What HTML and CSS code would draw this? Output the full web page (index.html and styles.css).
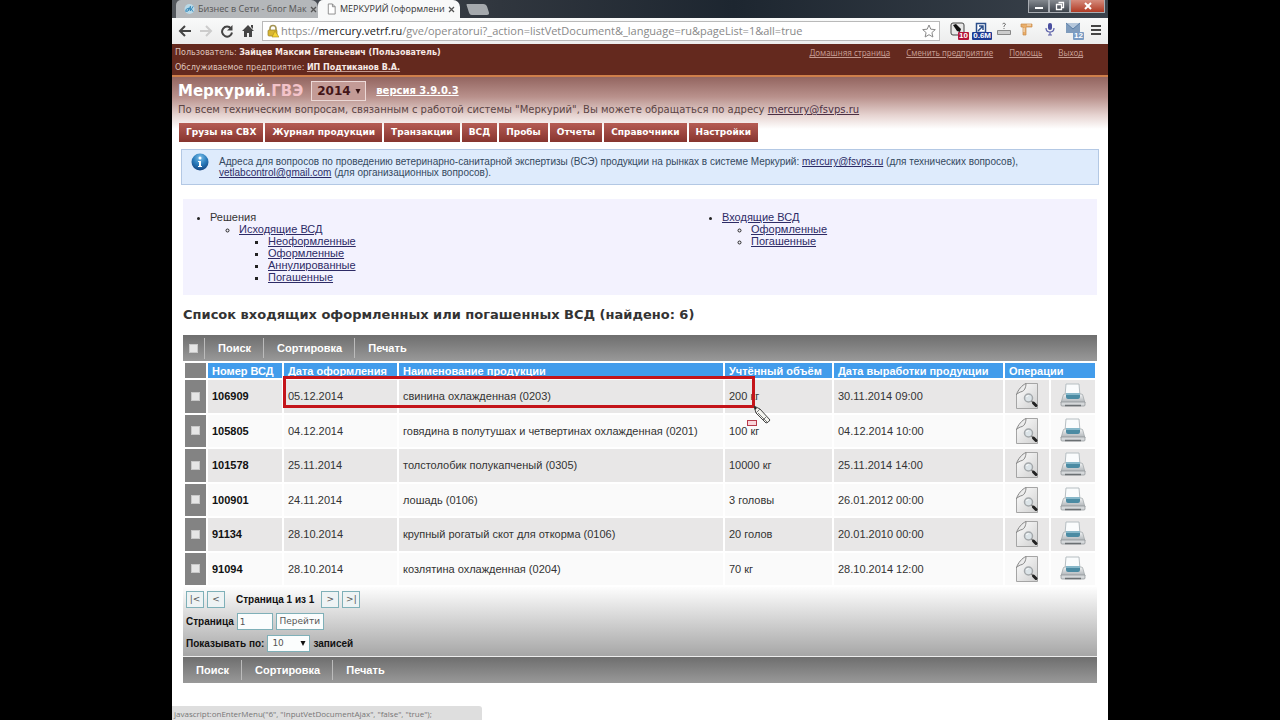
FILE: index.html
```html
<!DOCTYPE html>
<html lang="ru">
<head>
<meta charset="utf-8">
<title>МЕРКУРИЙ (оформление)</title>
<link rel="stylesheet" href="styles.css">
</head>
<body>
<svg class="defs" aria-hidden="true">
  <defs>
    <linearGradient id="paper" x1="0" y1="0" x2="1" y2="1"><stop offset="0" stop-color="#fff"/><stop offset="1" stop-color="#cfcfcf"/></linearGradient>
    <linearGradient id="body" x1="0" y1="0" x2="0" y2="1"><stop offset="0" stop-color="#f2f4f5"/><stop offset="1" stop-color="#a9aeb2"/></linearGradient>
    <radialGradient id="ball" cx=".5" cy=".25" r=".8"><stop offset="0" stop-color="#7cc0ea"/><stop offset=".5" stop-color="#2a7cbc"/><stop offset="1" stop-color="#123f7c"/></radialGradient>
  </defs>
  <symbol id="view" viewBox="0 0 26 28">
    <path d="M12 1.500H23.500V26.500H2.500V12Z" fill="url(#paper)"/>
    <path d="M12 1.500H23.500V26.500H2.500V12" fill="none" stroke="#a5a5a5"/>
    <path d="M12 1.500C12 6 10 9 8 9.500C6 10 4 11 2.500 12.500C4 8 8 3 12 1.500Z" fill="#ececec" stroke="#7b7b7b" stroke-width=".9"/>
    <circle cx="14.500" cy="16" r="4" fill="#dce4e8" stroke="#a4a8ab" stroke-width="1.500"/>
    <path d="M12.500 15a2.500 2.500 0 0 1 2-1.500" fill="none" stroke="#fff"/>
    <path d="M17.500 19l2 2" stroke="#777" stroke-width="1.500"/>
    <path d="M19.500 21l2.500 2.500" stroke="#222" stroke-width="3" stroke-linecap="round"/>
  </symbol>
  <symbol id="print" viewBox="0 0 26 26">
    <path d="M6 1H19L20 13H5Z" fill="#fafcfd" stroke="#b6bec2"/>
    <path d="M3 13Q3 11 5 11H21Q23 11 23 13L25 20H1Z" fill="url(#body)" stroke="#9aa0a4" stroke-width=".7"/>
    <path d="M6 10H20V14Q20 16 18 16H8Q6 16 6 14Z" fill="#4b8ba3"/>
    <path d="M6 10H20V12H6Z" fill="#86b7c9"/>
    <path d="M1 19H25V22Q25 23 24 23H2Q1 23 1 22Z" fill="#d5d8da" stroke="#8a8f93" stroke-width=".7"/>
    <path d="M5 22.500H21" stroke="#6a6f72" stroke-width="1.500"/>
  </symbol>
</svg>
<div class="window">
  <div class="tabs">
    <div class="tab tab-back"><svg class="fav" viewBox="0 0 12 12"><circle cx="6" cy="6" r="5.500" fill="#b9d9e8"/><path d="M2 8q3 2 3-3q-4 1-3 4M5 8l2-5 0 5 3-5M8 6l2 3" fill="none" stroke="#2f86b8"/></svg><span class="tab-text">Бизнес в Сети - блог Мак</span><button class="tab-x" aria-label="Закрыть"><svg viewBox="0 0 7 7"><path d="M1 1l5 5M6 1L1 6" stroke="#555" stroke-width="1.300"/></svg></button></div>
    <div class="tab tab-front"><svg class="fav" viewBox="0 0 12 12"><path d="M2.500 .5H7l3 3v8H2.500ZM7 .5v3h3" fill="#fff" stroke="#888"/></svg><span class="tab-text">МЕРКУРИЙ (оформлени</span><button class="tab-x" aria-label="Закрыть"><svg viewBox="0 0 7 7"><path d="M1 1l5 5M6 1L1 6" stroke="#555" stroke-width="1.300"/></svg></button></div>
    <div class="tab-new"></div>
    <div class="wincontrols">
      <button aria-label="Свернуть"><svg viewBox="0 0 12 10"><path d="M2 6h8v2H2z" fill="#fff"/></svg></button>
      <button aria-label="Развернуть"><svg viewBox="0 0 12 10"><path d="M4.500 1.500h5v5h-2M2.500 3.500h5v5h-5z" fill="none" stroke="#fff" stroke-width="1.300"/></svg></button>
      <button class="close" aria-label="Закрыть окно"><svg viewBox="0 0 12 10"><path d="M3 2l6 6M9 2l-6 6" stroke="#fff" stroke-width="2"/></svg></button>
    </div>
  </div>
  <div class="browserbar">
    <svg class="bicon" viewBox="0 0 14 14"><path d="M13 7H2M7 2L2 7l5 5" fill="none" stroke="#444" stroke-width="2"/></svg>
    <svg class="bicon" viewBox="0 0 14 14"><path d="M1 7h11M7 2l5 5-5 5" fill="none" stroke="#ccc" stroke-width="2"/></svg>
    <svg class="bicon" viewBox="0 0 14 14"><path d="M11 4.500A5 5 0 1 0 12 8.500" fill="none" stroke="#444" stroke-width="2"/><path d="M12.500 1v5.500H7z" fill="#444"/></svg>
    <svg class="bicon" viewBox="0 0 14 14"><path d="M7 1l6 6h-2v6H8V9H6v4H3V7H1zM10 1h2v4l-2-2z" fill="#444"/></svg>
    <div class="address">
      <svg class="lock" viewBox="0 0 12 14"><path d="M3 7V4.500a3 3 0 0 1 6 0V7" fill="none" stroke="#a49455" stroke-width="1.600"/><rect x="1" y="6" width="9" height="6" rx="1" fill="#d9b634" stroke="#97802a" stroke-width=".7"/><path d="M8 7l4 6H5z" fill="#f5d435" stroke="#a88a1c" stroke-width=".6"/></svg>
      <span class="url">https://<b>mercury.vetrf.ru</b>/gve/operatorui?_action=listVetDocument&amp;_language=ru&amp;pageList=1&amp;all=true</span>
      <svg class="bicon" viewBox="0 0 14 14"><path d="M7 1l1.800 4.200 4.500.4-3.400 3 1 4.400L7 10.700 3.100 13l1-4.400-3.400-3 4.500-.4z" fill="#fff" stroke="#888"/></svg>
    </div>
    <div class="exts">
      <div class="ext"><svg viewBox="0 0 16 14"><rect x="1" y="1" width="13" height="12" rx="2" fill="#e8e8e8" stroke="#444"/><path d="M3 3l3-1 5 5-1 3-3-1-2-3z" fill="#111"/></svg><span class="badge red">10</span></div>
      <div class="ext"><svg viewBox="0 0 16 14"><rect x="3.500" y="1.500" width="9" height="9" fill="#fff" stroke="#2a4e8a" stroke-width="1.500"/><path d="M5 9l5-5M6 4h4v4" fill="none" stroke="#2a4e8a" stroke-width="1.500"/></svg><span class="badge blue">0.6M</span></div>
      <div class="ext"><svg viewBox="0 0 16 14"><path d="M1.500 8.500h13v4h-13z" fill="#ccc" stroke="#888"/><path d="M6.500 2q1.500-2 3 0q0 1-1.500 2v1M8 6v1" fill="none" stroke="#777"/></svg></div>
      <div class="ext"><svg viewBox="0 0 16 14"><path d="M2 2h11v3H7v8H4V5H2z" fill="#e9ae6a" stroke="#c98a48" stroke-width=".7"/><path d="M9 2v2M11 2v2M4 7h2M4 9h2" stroke="#fff" stroke-width=".7"/></svg></div>
      <div class="ext"><svg viewBox="0 0 16 14"><rect x="6" y="1" width="4" height="7" rx="2" fill="#4a4fa0"/><path d="M4 6q0 4 4 4t4-4M8 10v3M6 13h4" fill="none" stroke="#5a5fa8" stroke-width="1.200"/></svg></div>
      <div class="ext"><svg viewBox="0 0 16 14"><path d="M1 1h14v10H1z" fill="#7f9cbd"/><path d="M1 1l7 6 7-6" fill="#b5c7db" stroke="#5e80a8"/></svg><span class="badge steel">12</span></div>
      <div class="ext"><svg viewBox="0 0 16 14"><path d="M3 4h10M3 8h10M3 12h10" stroke="#444" stroke-width="2"/></svg></div>
    </div>
  </div>

  <header class="userbar">
    <div class="userinfo">
      <div>Пользователь: <b>Зайцев Максим Евгеньевич (Пользователь)</b></div>
      <div>Обслуживаемое предприятие: <a href="#"><b>ИП Подтиканов В.А.</b></a></div>
    </div>
    <nav class="userlinks"><a href="#">Домашняя страница</a><a href="#">Сменить предприятие</a><a href="#">Помощь</a><a href="#">Выход</a></nav>
  </header>

  <div class="hero">
    <div class="brand">
      <h1>Меркурий.<span>ГВЭ</span></h1>
      <select class="year" aria-label="Год"><option>2014</option></select>
      <svg class="arrow year-arrow" viewBox="0 0 6 6"><path d="M0 0h6L3 6z" fill="#311"/></svg>
      <a class="version" href="#">версия 3.9.0.3</a>
    </div>
    <p class="support">По всем техническим вопросам, связанным с работой системы "Меркурий", Вы можете обращаться по адресу <a href="#">mercury@fsvps.ru</a></p>
    <nav class="menu"><a href="#">Грузы на СВХ</a><a href="#">Журнал продукции</a><a href="#">Транзакции</a><a href="#">ВСД</a><a href="#">Пробы</a><a href="#">Отчеты</a><a href="#">Справочники</a><a href="#">Настройки</a></nav>
  </div>

  <main class="content">
    <div class="notice">
      <svg class="info" viewBox="0 0 18 18"><circle cx="9" cy="9" r="8.500" fill="url(#ball)"/><circle cx="9" cy="5" r="1.500" fill="#fff"/><path d="M7 8h3v5h1v1H7v-1h1V9H7z" fill="#fff"/></svg>
      <p>Адреса для вопросов по проведению ветеринарно-санитарной экспертизы (ВСЭ) продукции на рынках в системе Меркурий: <a href="#">mercury@fsvps.ru</a> (для технических вопросов),<br><a href="#">vetlabcontrol@gmail.com</a> (для организационных вопросов).</p>
    </div>

    <div class="tree">
      <ul>
        <li>Решения
          <ul><li><a href="#">Исходящие ВСД</a>
            <ul><li><a href="#">Неоформленные</a></li><li><a href="#">Оформленные</a></li><li><a href="#">Аннулированные</a></li><li><a href="#">Погашенные</a></li></ul>
          </li></ul>
        </li>
      </ul>
      <ul>
        <li><a href="#">Входящие ВСД</a>
          <ul><li><a href="#">Оформленные</a></li><li><a href="#">Погашенные</a></li></ul>
        </li>
      </ul>
    </div>

    <h2>Список входящих оформленных или погашенных ВСД (найдено: 6)</h2>

    <div class="toolbar">
      <span class="tool-check"><input type="checkbox" aria-label="Выбрать все"></span>
      <button>Поиск</button><button>Сортировка</button><button>Печать</button>
    </div>
    <div class="grid">
      <table>
        <colgroup><col class="c-check"><col class="c-num"><col class="c-date"><col><col class="c-vol"><col class="c-made"><col class="c-op"><col class="c-op"></colgroup>
        <thead><tr><th class="check"></th><th>Номер ВСД</th><th>Дата оформления</th><th>Наименование продукции</th><th>Учтённый объём</th><th>Дата выработки продукции</th><th colspan="2">Операции</th></tr></thead>
        <tbody>
          <tr><td class="check"><input type="checkbox" aria-label="106909"></td><td><b>106909</b></td><td>05.12.2014</td><td>свинина охлажденная (0203)</td><td>200 кг</td><td>30.11.2014 09:00</td><td class="op"><svg class="view"><use href="#view"/></svg></td><td class="op"><svg class="print"><use href="#print"/></svg></td></tr>
          <tr><td class="check"><input type="checkbox" aria-label="105805"></td><td><b>105805</b></td><td>04.12.2014</td><td>говядина в полутушах и четвертинах охлажденная (0201)</td><td>100 кг</td><td>04.12.2014 10:00</td><td class="op"><svg class="view"><use href="#view"/></svg></td><td class="op"><svg class="print"><use href="#print"/></svg></td></tr>
          <tr><td class="check"><input type="checkbox" aria-label="101578"></td><td><b>101578</b></td><td>25.11.2014</td><td>толстолобик полукапченый (0305)</td><td>10000 кг</td><td>25.11.2014 14:00</td><td class="op"><svg class="view"><use href="#view"/></svg></td><td class="op"><svg class="print"><use href="#print"/></svg></td></tr>
          <tr><td class="check"><input type="checkbox" aria-label="100901"></td><td><b>100901</b></td><td>24.11.2014</td><td>лошадь (0106)</td><td>3 головы</td><td>26.01.2012 00:00</td><td class="op"><svg class="view"><use href="#view"/></svg></td><td class="op"><svg class="print"><use href="#print"/></svg></td></tr>
          <tr><td class="check"><input type="checkbox" aria-label="91134"></td><td><b>91134</b></td><td>28.10.2014</td><td>крупный рогатый скот для откорма (0106)</td><td>20 голов</td><td>20.01.2010 00:00</td><td class="op"><svg class="view"><use href="#view"/></svg></td><td class="op"><svg class="print"><use href="#print"/></svg></td></tr>
          <tr><td class="check"><input type="checkbox" aria-label="91094"></td><td><b>91094</b></td><td>28.10.2014</td><td>козлятина охлажденная (0204)</td><td>70 кг</td><td>28.10.2014 12:00</td><td class="op"><svg class="view"><use href="#view"/></svg></td><td class="op"><svg class="print"><use href="#print"/></svg></td></tr>
        </tbody>
      </table>
      <div class="marker"></div>
      <svg class="pencil" viewBox="0 0 18 20"><path d="M1 1L3 8L13 18Q15 18 17 15L7 4Z" fill="#f4f4ef" stroke="#444"/><path d="M3 8L7 4M5 8l9 9M10 15l4-4" fill="none" stroke="#777"/><path d="M1 1l1 4 2-2z" fill="#222"/></svg>
      <div class="chip"></div>
    </div>
    <div class="pager">
      <div class="line pages"><button>|&lt;</button><button>&lt;</button><span>Страница 1 из 1</span><button>&gt;</button><button>&gt;|</button></div>
      <div class="line"><label for="page">Страница</label><input id="page" type="text" value="1"><button class="go">Перейти</button></div>
      <div class="line"><label for="count">Показывать по:</label><div class="count"><select id="count"><option>10</option></select><svg class="arrow" viewBox="0 0 6 6"><path d="M0 0h6L3 6z" fill="#111"/></svg></div><span>записей</span></div>
    </div>
    <div class="toolbar"><button>Поиск</button><button>Сортировка</button><button>Печать</button></div>
  </main>
  <div class="status">javascript:onEnterMenu("6", "InputVetDocumentAjax", "false", "true");</div>
</div>
</body>
</html>
```
FILE: styles.css
```css
* { box-sizing: border-box; }
body {
  margin: 0;
  background: #000;
  font: 11px/12px "Liberation Sans", Arial, sans-serif;
  color: #333;
}
button, input, select { font: inherit; color: inherit; margin: 0; }
button { cursor: pointer; }
h1, h2, p, ul { margin: 0; }
a { color: #2d2b66; }
.defs { position: absolute; width: 0; height: 0; }
.window {
  position: relative;
  margin: 0 172px;
  min-height: 100vh;
  background: #fff;
}

/* browser chrome */
.tabs {
  display: flex;
  height: 18px;
  padding-left: 4px;
  background: linear-gradient(90deg, #54585d, #30363e 35%, #1d2630 60%, #3b434c);
  font: 9px/18px "Open Sans", "Noto Sans", sans-serif;
}
.tab {
  display: flex;
  align-items: center;
  gap: 3px;
  width: 142px;
  padding: 0 6px 0 8px;
  border-radius: 5px 7px 0 0;
}
.tab-back { background: #b4b7ba; color: #555; }
.tab-front { background: #f8f9f9; }
.fav { flex: none; width: 11px; height: 12px; }
.tab-text {
  flex: 1;
  white-space: nowrap;
}
.tab-x { display: flex; flex: none; border: 0; padding: 0; background: none; }
.tab-x svg { width: 7px; height: 7px; }
.tab-new {
  width: 20px;
  height: 11px;
  margin: 4px 0 0 8px;
  border-radius: 1px 3px 3px 2px;
  background: #a5a9ad;
  transform: skewX(18deg);
}
.wincontrols { display: flex; height: 13px; margin: 0 3px 0 auto; }
.wincontrols button {
  display: flex;
  align-items: center;
  justify-content: center;
  width: 21px;
  padding: 0;
  border: 1px solid #a9adb3;
  border-top: 0;
  background: linear-gradient(#84898f, #3d434b);
}
.wincontrols .close { width: 35px; background: linear-gradient(#d58b7c, #b03a24); }
.wincontrols svg { width: 12px; height: 10px; }
.browserbar {
  display: flex;
  align-items: center;
  gap: 7px;
  height: 26px;
  padding: 0 1px 0 6px;
  background: linear-gradient(#f9fafa, #ececec);
}
.bicon { flex: none; width: 14px; height: 14px; }
.address {
  display: flex;
  flex: 1;
  align-items: center;
  min-width: 0;
  height: 20px;
  padding: 0 3px 0 4px;
  border: 1px solid #b9b9b9;
  background: #fff;
}
.lock { flex: none; width: 12px; height: 14px; margin-right: 2px; }
.url {
  flex: 1;
  overflow: hidden;
  white-space: nowrap;
  font: 11px/18px "Open Sans", "Noto Sans", sans-serif;
  color: #888;
}
.url b { font-weight: 400; color: #222; }
.exts { display: flex; gap: 1px; }
.ext { position: relative; display: flex; justify-content: center; width: 22px; height: 18px; }
.ext svg { width: 16px; height: 14px; }
.badge {
  position: absolute;
  right: 0;
  bottom: 0;
  padding: 0 1px;
  border-radius: 1px;
  font: bold 8px/8px "Liberation Sans", sans-serif;
  color: #fff;
}
.red { background: #b5153a; }
.blue { background: #1d3b94; }
.steel { background: #7a9cc4; }

/* site header */
.userbar {
  display: flex;
  justify-content: space-between;
  height: 33px;
  padding: 1px 25px 0 3px;
  border-bottom: 2px solid #cf7f4a;
  background: #64291e;
  font: 8px/15px "DejaVu Sans", Verdana, sans-serif;
  color: #dfc4bc;
}
.userbar b { color: #f7e9e5; }
.userbar a { color: #c49a90; }
.userlinks { display: flex; gap: 16px; font-family: "Noto Sans", sans-serif; }
.hero {
  padding: 3px 6px 0;
  background: linear-gradient(#936560, #b9918c 20px, #e6d3d0 38px, #fff 52px);
  font-family: "DejaVu Sans", Verdana, sans-serif;
}
.brand { display: flex; align-items: center; height: 22px; }
h1 { font-size: 15px; line-height: 20px; color: #fff; }
h1 span { color: #f3c3c9; }
.year {
  appearance: none;
  width: 55px;
  height: 20px;
  margin: 0 5px 0 8px;
  padding: 0 5px;
  border: 1px solid #ecd9d7;
  border-radius: 0;
  background: #c39b96;
  font-size: 12px;
  font-weight: bold;
  color: #431518;
}
.arrow { width: 6px; height: 5px; pointer-events: none; }
.year-arrow { margin-left: -16px; margin-right: 15px; }
.version { font-size: 10px; font-weight: bold; color: #fff; }
.support { padding-top: 2px; font-size: 10px; line-height: 12px; color: #5b4444; }
.support a { color: #4c3044; }
.menu { display: flex; gap: 2px; margin: 7px 1px 0; }
.menu a {
  padding: 0 7px;
  background: linear-gradient(#b55c54, #87352f);
  font: bold 9px/19px "DejaVu Sans", Verdana, sans-serif;
  color: #fff;
  text-decoration: none;
}

/* content */
.content { padding: 7px 11px 38px; }
.notice {
  display: flex;
  gap: 10px;
  margin: 0 -2px 14px;
  padding: 6px 9px;
  border: 1px solid #b3c8e4;
  background: #deebfc;
  font-size: 10px;
  line-height: 11px;
  color: #34495e;
}
.info { flex: none; width: 18px; height: 18px; margin-top: -3px; }
.tree {
  display: grid;
  grid-template-columns: 512px 1fr;
  padding: 12px 0;
  background: #f3f2fe;
}
.tree ul { padding-left: 29px; list-style: square; }
.tree > ul { padding-left: 27px; list-style: disc; }
.tree > ul > li > ul { list-style: circle; }
.tree li::marker { color: #222; }
h2 {
  padding: 14px 0;
  font: bold 13px/12px "DejaVu Sans", Verdana, sans-serif;
}
.toolbar {
  display: flex;
  align-items: center;
  height: 26px;
  background: linear-gradient(#6e6e6e, #999);
}
.toolbar button {
  height: 20px;
  padding: 0 12px 0 13px;
  border: 0;
  border-right: 1px solid #bbb;
  background: none;
  font-weight: bold;
  color: #fff;
}
.toolbar button:last-child { border: 0; }
input[type="checkbox"] {
  appearance: none;
  display: block;
  width: 9px;
  height: 9px;
  border: 1px solid #c8c8c8;
  background: #e6e6e6;
}
.tool-check { padding: 6px; border-right: 1px solid #bbb; }
.grid { position: relative; }
table {
  width: 100%;
  height: 226px;
  table-layout: fixed;
  border-spacing: 2px;
}
.c-check { width: 21px; }
.c-num { width: 74px; }
.c-date { width: 113px; }
.c-vol { width: 107px; }
.c-made { width: 169px; }
.c-op { width: 44px; }
th, td { padding: 0 4px; text-align: left; white-space: nowrap; }
th { height: 15px; background: #429ceb; color: #fff; }
td { background: #fafafa; }
tbody tr:nth-child(odd) td { background: #e8e7e7; }
th.check, tbody tr td.check { padding: 0 6px; background: #838383; }
td b { color: #111; }
td.op { padding: 0; }
td svg { display: block; margin: 0 auto; }
.view { width: 26px; height: 28px; }
.print { width: 26px; height: 26px; }
.marker {
  position: absolute;
  left: 100px;
  top: 15px;
  width: 472px;
  height: 32px;
  border: 3px solid #c4141a;
}
.pencil { position: absolute; left: 570px; top: 44px; width: 18px; height: 20px; }
.chip {
  position: absolute;
  left: 564px;
  top: 59px;
  width: 10px;
  height: 6px;
  border: 1px solid #b63a4a;
  background: #f8d5da;
}
.pager {
  display: grid;
  gap: 5px;
  padding: 4px 3px;
  border-bottom: 1px solid #eee;
  background: linear-gradient(#fdfdfd, #a6a6a6);
  font: bold 9px/17px "Liberation Sans", Arial, sans-serif;
  color: #111;
}
.line { display: flex; align-items: center; gap: 3px; }
.line span, .line label { font-size: 10px; }
.pages span { padding: 0 4px 0 8px; }
.pager button, .pager input, .pager select {
  appearance: none;
  height: 17px;
  padding: 0 2px;
  border: 1px solid #7fb0b8;
  border-radius: 0;
  background: #fbfdfd;
  font: 9px/15px "DejaVu Sans", Verdana, sans-serif;
  color: #555;
}
.pages button { width: 18px; background: #eef3f4; }
.pager input { width: 36px; }
.pager .go { width: 48px; }
.count { display: flex; align-items: center; }
.pager select { width: 43px; padding: 0 4px; }
.count .arrow { margin-left: -10px; margin-right: 4px; }
.status {
  position: absolute;
  left: 0;
  bottom: 0;
  padding: 0 50px 0 2px;
  border-radius: 0 3px 0 0;
  background: #dedede;
  font: 8px/15px "Open Sans", "Noto Sans", sans-serif;
  color: #777;
}
```
